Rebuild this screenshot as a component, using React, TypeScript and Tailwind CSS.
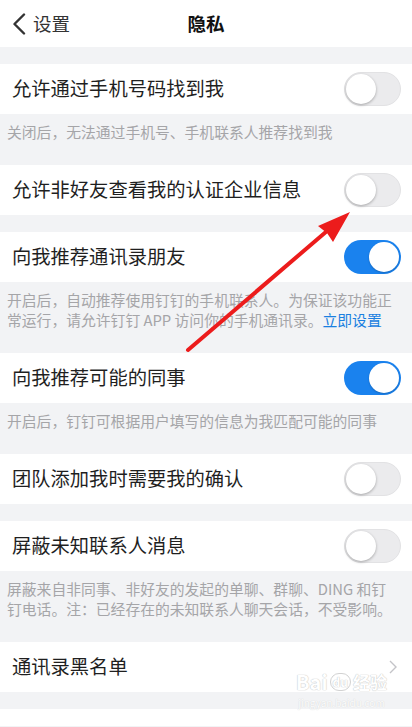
import React from 'react';

type Item = {
  label: string;
  on?: boolean;
  arrow?: boolean;
};

function Toggle({ on }: { on: boolean }) {
  return on ? (
    <div className="w-[57px] h-[34px] rounded-full bg-[#1a82ee] flex items-center justify-end pr-[2px]">
      <div className="w-[30px] h-[30px] rounded-full bg-white shadow-[0_1px_2px_rgba(0,0,0,0.2)]" />
    </div>
  ) : (
    <div className="w-[57px] h-[34px] rounded-full bg-[#ebebed] border border-[#e2e2e4] flex items-center pl-[1px]">
      <div className="w-[30px] h-[30px] rounded-full bg-white shadow-[0_1px_3px_rgba(0,0,0,0.3)]" />
    </div>
  );
}

function Row({ item }: { item: Item }) {
  return (
    <div className="h-[50px] bg-white flex items-center justify-between pl-[12px] pr-[11px]">
      <span className="text-[19.3px] text-[#1f1f1f] leading-none">{item.label}</span>
      {item.arrow ? (
        <svg width="8" height="14" viewBox="0 0 8 14" className="mr-[4px]">
          <polyline points="1,1 7,7 1,13" fill="none" stroke="#c4c4c8" strokeWidth="1.4" />
        </svg>
      ) : (
        <Toggle on={!!item.on} />
      )}
    </div>
  );
}

function Desc({ children }: { children: React.ReactNode }) {
  return (
    <div className="pl-[7px] pr-[14px] pt-[8px] pb-[23px] text-[14.8px] leading-[20px] text-[#a5a5a8]">
      {children}
    </div>
  );
}

function Gap() {
  return <div className="h-[17px]" />;
}

export default function App() {
  return (
    <div
      className="relative w-[412px] h-[727px] overflow-hidden bg-[#f2f3f5]"
      style={{ fontFamily: '"Noto Sans CJK SC", "Noto Sans", sans-serif' }}
    >
      {/* Header */}
      <div className="h-[47px] bg-white relative flex items-center">
        <div className="flex items-center pl-[12px]">
          <svg width="14" height="22" viewBox="0 0 14 22">
            <polyline points="12,1.5 2.5,11 12,20.5" fill="none" stroke="#333" strokeWidth="2.4" strokeLinecap="round" strokeLinejoin="round" />
          </svg>
          <span className="ml-[7px] text-[18.5px] text-[#333]">设置</span>
        </div>
        <span className="absolute left-0 right-0 text-center text-[18.5px] font-bold text-[#111] pointer-events-none">隐私</span>
      </div>

      <Gap />
      <Row item={{ label: '允许通过手机号码找到我' }} />
      <Desc>关闭后，无法通过手机号、手机联系人推荐找到我</Desc>

      <Row item={{ label: '允许非好友查看我的认证企业信息' }} />
      <Gap />

      <Row item={{ label: '向我推荐通讯录朋友', on: true }} />
      <Desc>
        开启后，自动推荐使用钉钉的手机联系人。为保证该功能正
        <br />
        常运行，请允许钉钉 APP 访问你的手机通讯录。
        <span className="text-[#1a7fe0]">立即设置</span>
      </Desc>

      <Row item={{ label: '向我推荐可能的同事', on: true }} />
      <Desc>开启后，钉钉可根据用户填写的信息为我匹配可能的同事</Desc>

      <Row item={{ label: '团队添加我时需要我的确认' }} />
      <Gap />

      <Row item={{ label: '屏蔽未知联系人消息' }} />
      <Desc>
        屏蔽来自非同事、非好友的发起的单聊、群聊、DING 和钉
        <br />
        钉电话。注：已经存在的未知联系人聊天会话，不受影响。
      </Desc>

      <Row item={{ label: '通讯录黑名单', arrow: true }} />
      <Gap />
      <div className="h-[17px] bg-white" />

      {/* watermark */}
      <div className="absolute left-[296px] top-[670px] flex flex-col items-center pointer-events-none opacity-80">
        <div className="flex items-center gap-[2px] h-[24px] text-white [text-shadow:0_0_1px_#b8b8b8,0_0_1px_#b8b8b8]">
          <span className="text-[20px] font-bold leading-[24px]">Bai</span>
          <span className="rounded-full border border-[#c8c8c8] px-[2px] text-[12px] font-bold leading-[16px]">du</span>
          <span className="text-[17px] font-bold leading-[24px]">经验</span>
        </div>
        <span className="mt-[2px] text-[10px] leading-[13px] text-white [text-shadow:0_0_1px_#c0c0c0]">jingyan.baidu.com</span>
      </div>

      {/* red arrow */}
      <svg className="absolute left-0 top-0 pointer-events-none" width="412" height="727" viewBox="0 0 412 727">
        <line x1="188" y1="350" x2="327" y2="231" stroke="#ec1c1c" strokeWidth="4" strokeLinecap="round" />
        <polygon points="350,212 333,242 327,233 318,226" fill="#ec1c1c" />
      </svg>
    </div>
  );
}
